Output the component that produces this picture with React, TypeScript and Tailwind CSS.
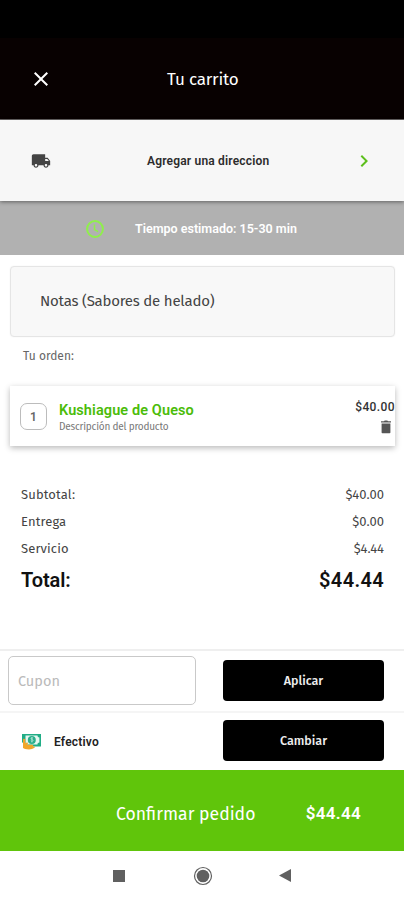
import React from "react";
import { MdLocalShipping, MdClose, MdChevronRight } from "react-icons/md";

const humanist = "font-['Fira_Sans','Noto_Sans',sans-serif]";

function ClockIcon() {
  return (
    <svg className="block size-[20px]" viewBox="0 0 20 20" fill="none" stroke="#8ff04a">
      <circle cx="10" cy="10" r="7.9" strokeWidth="2" />
      <path d="M9.5 5.5v5l3.6 2.1" strokeWidth="1.5" />
    </svg>
  );
}

function TrashIcon() {
  return (
    <svg className="block h-[14px] w-[12px]" viewBox="0 0 12 14" fill="#565656">
      <path d="M1 1.2h3L4.7.5h2.6l.7.7h3v1.4H1zM1.6 3.5h8.8v9c0 .5-.3.8-.8.8H2.4c-.5 0-.8-.3-.8-.8z" />
    </svg>
  );
}

function CashIcon() {
  return (
    <svg className="block h-[17px] w-[21px]" viewBox="0 0 21 17">
      <path d="M1 1h19v12.5H5L1 9z" fill="#20ad86" />
      <path d="M4.5 2.6h12c0 1.3.7 2 1.9 2v5c-1.2 0-1.9.7-1.9 1.9h-12z" fill="#e6f7f0" />
      <circle cx="10.8" cy="6.9" r="4" fill="#2bae8b" />
      <path d="M12 5.2c-.7-.6-2-.5-2 .4 0 1.1 2.1.7 2.1 1.8 0 1-1.5 1.1-2.3.4M10.9 4v5.5" fill="none" stroke="#c6eee0" strokeWidth=".7" />
      <path d="M2 6.8c0-1.4 2-1.4 2.2 0l.2 3.4 1.4-.6c1-.3 1.7.8.8 1.5l-.5.6h4.8c1.4 0 1.8 1.3.8 1.8h2c.5.6 0 1.2-.6 1.4L11 16c-2.5.7-5 .3-7 0L2 15z" fill="#f0a62b" />
    </svg>
  );
}

const costs = [
  { label: "Subtotal:", value: "$40.00" },
  { label: "Entrega", value: "$0.00" },
  { label: "Servicio", value: "$4.44" },
];

export default function App() {
  return (
    <main className={`flex h-[900px] w-[404px] flex-col overflow-hidden bg-white text-[#444] ${humanist}`}>
      <div className="h-[38px] shrink-0 bg-black" />
      <header className="flex h-[82px] shrink-0 items-center border-b border-[#686565] bg-[#080101] pl-[29px] text-white">
        <MdClose className="size-[24px]" />
        <h1 className="ml-[114px] mt-[2px] whitespace-nowrap text-[17px] leading-[20px] tracking-[-0.2px]">Tu carrito</h1>
      </header>

      <button className="z-10 flex h-[81px] shrink-0 items-center bg-[#f7f7f7] pl-[31px] pr-[28px] text-left font-[Roboto,sans-serif] shadow-[0_1px_4px_rgba(0,0,0,0.45)]">
        <MdLocalShipping className="size-[20px] text-[#444]" />
        <span className="ml-[96px] whitespace-nowrap text-[12px] font-semibold leading-4 tracking-[0.18px] text-[#2c2c2c]">Agregar una direccion</span>
        <MdChevronRight className="ml-auto size-[24px] text-[#5dbf1d]" />
      </button>

      <div className="flex h-[54px] shrink-0 items-center bg-[#b1b1b1] pl-[85px] pt-[2px] font-[Roboto,sans-serif] text-white">
        <ClockIcon />
        <span className="ml-[30px] whitespace-nowrap text-[12.5px] font-semibold leading-4">Tiempo estimado: 15-30 min</span>
      </div>

      <section className="flex h-[394px] shrink-0 flex-col pt-[11px]">
        <div className="ml-[10px] mr-[9px] flex h-[71px] items-center rounded-[4px] border border-[#e5e5e5] bg-[#f8f8f8] pl-[29px] text-[15px] shadow-[0_0_2px_rgba(0,0,0,0.05)]">
          <span className="whitespace-nowrap tracking-[-0.22px]">Notas (Sabores de helado)</span>
        </div>
        <h2 className="ml-[23px] mt-[10px] text-[12px] leading-[18px] text-[#666]">Tu orden:</h2>

        <article className="ml-[10px] mr-[9px] mt-[21px] flex h-[60px] shrink-0 bg-white shadow-[0_2px_6px_rgba(0,0,0,0.28)]">
          <div className="ml-[10px] mt-[17px] flex size-[27px] items-center justify-center rounded-[7px] border border-[#bcbcbc] font-[Roboto,sans-serif] text-[12px] font-semibold text-[#666]">1</div>
          <div className="ml-[12px] mt-[15px] whitespace-nowrap">
            <h3 className="font-[Roboto,sans-serif] text-[14.5px] font-semibold leading-[19px] tracking-[0.1px] text-[#4bbc09]">Kushiague de Queso</h3>
            <p className="text-[10px] leading-[14px] tracking-[-0.2px] text-[#777]">Descripción del producto</p>
          </div>
          <div className="ml-auto mt-[13px] flex flex-col items-end font-[Roboto,sans-serif] text-[12px] font-medium leading-[16px] text-[#333]">
            <span className="tracking-[0.4px]">$40.00</span>
            <div className="mr-[3px] mt-[5px]"><TrashIcon /></div>
          </div>
        </article>

        <div className="ml-[21px] mr-[20px] mt-[35px]">
          {costs.map((cost) => (
            <div key={cost.label} className="flex h-[27px] items-center justify-between text-[13px] leading-[27px]">
              <span className="tracking-[0.12px]">{cost.label}</span><span>{cost.value}</span>
            </div>
          ))}
          <div className="flex h-[36px] items-center justify-between font-[Roboto,sans-serif] text-[20px] font-semibold text-[#111]">
            <span className="tracking-[-0.1px]">Total:</span><span className="tracking-[0.35px]">$44.44</span>
          </div>
        </div>
      </section>

      <section className="flex h-[62px] shrink-0 items-start border-t-2 border-[#efefef] pl-[8px] pr-[20px] pt-[5px]">
        <input aria-label="Cupon" placeholder="Cupon" className="h-[49px] w-[188px] rounded-[5px] border border-[#c9c9c9] px-[9px] pt-[1px] text-[14.5px] outline-none placeholder:text-[#bababa]" />
        <button className="ml-[27px] mt-[4px] h-[41px] w-[161px] rounded-[4px] bg-black pt-[2px] text-[12.5px] font-medium text-[#eee]">Aplicar</button>
      </section>

      <section className="flex h-[59px] shrink-0 items-center border-t-2 border-[#f5f5f5] pl-[21px] pr-[20px]">
        <CashIcon />
        <span className="ml-[12px] w-[45px] whitespace-nowrap font-[Roboto,sans-serif] text-[12px] font-semibold tracking-[0.2px] text-[#222]">Efectivo</span>
        <button className="mb-[2px] ml-auto h-[41px] w-[161px] rounded-[4px] bg-black pt-[2px] text-[12.5px] font-medium text-[#eee]">Cambiar</button>
      </section>

      <button className="flex h-[81px] shrink-0 items-center justify-between bg-[#60c50b] pl-[116px] pr-[43px] pt-[6px] text-left text-white">
        <span className="mt-[3px] whitespace-nowrap text-[17.6px]">Confirmar pedido</span>
        <span className="font-[Roboto,sans-serif] text-[17px] font-semibold tracking-[0.3px]">$44.44</span>
      </button>

      <nav className="flex min-h-0 flex-1 items-center pl-[113px] text-[#606060]">
        <span className="block size-[12px] bg-[#606060]" />
        <svg className="ml-[68px] size-[20px]" viewBox="0 0 20 20">
          <circle cx="10" cy="10" r="8.5" fill="none" stroke="#606060" strokeWidth="1.2" />
          <circle cx="10" cy="10" r="6.3" fill="#606060" />
        </svg>
        <svg className="ml-[66px] h-[13px] w-[12px]" viewBox="0 0 12 13" fill="#606060"><path d="M12 0v13L0 6.5z" /></svg>
      </nav>
    </main>
  );
}
